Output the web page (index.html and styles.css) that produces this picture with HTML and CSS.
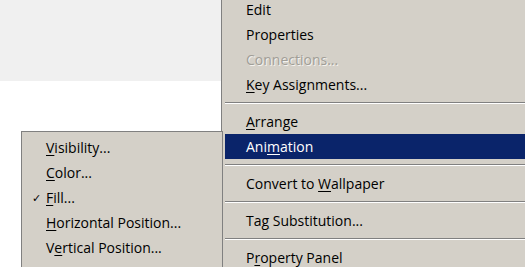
FILE: index.html
```html
<!DOCTYPE html>
<html>
<head>
<meta charset="utf-8">
<link rel="stylesheet" href="styles.css">
</head>
<body>
<div class="screen">
  <div class="canvas">
    <div class="canvas-top"></div>
  </div>
  <div class="menu">
    <div class="items">
      <div class="item">Edit</div>
      <div class="item">Properties</div>
      <div class="item disabled">Connections...</div>
      <div class="item"><u>K</u>ey Assignments...</div>
      <div class="sep"></div>
      <div class="item"><u>A</u>rrange</div>
      <div class="item active">Ani<u>m</u>ation</div>
      <div class="sep"></div>
      <div class="item">Convert to <u>W</u>allpaper</div>
      <div class="sep"></div>
      <div class="item">Ta<u>g</u> Substitution...</div>
      <div class="sep"></div>
      <div class="item">P<u>r</u>operty Panel</div>
    </div>
  </div>
  <div class="submenu">
    <div class="item"><u>V</u>isibility...</div>
    <div class="item"><u>C</u>olor...</div>
    <div class="item checked"><span class="check">&#10003;</span><u>F</u>ill...</div>
    <div class="item"><u>H</u>orizontal Position...</div>
    <div class="item">V<u>e</u>rtical Position...</div>
    <div class="item"><u>W</u>idth...</div>
  </div>
</div>
</body>
</html>
```
FILE: styles.css
```css
html, body {
  margin: 0;
  padding: 0;
  background: #ffffff;
}
.screen {
  position: relative;
  width: 525px;
  height: 267px;
  overflow: hidden;
  display: flex;
  font-family: "Open Sans", "DejaVu Sans", sans-serif;
  font-size: 14px;
  color: #000;
}
.canvas {
  width: 221px;
  flex: none;
}
.canvas-top {
  height: 81px;
  background: #f0f0f0;
}
.menu {
  flex: 1;
  background: #d4d0c8;
  border-left: 1px solid #808080;
  padding: 0 0 0 3px;
}
.items {
  margin-top: -3px;
}
.item {
  height: 25px;
  line-height: 25px;
  padding-left: 21px;
  white-space: nowrap;
  position: relative;
}
.item u {
  text-decoration-thickness: 1px;
  text-underline-offset: 2px;
}
.item.disabled {
  color: #a19e97;
  text-shadow: 1px 1px 0 #f4f2ee;
}
.item.active {
  background: #0a246a;
  color: #ffffff;
}
.sep {
  height: 2px;
  margin: 5px 0;
  border-top: 1px solid #808080;
  border-bottom: 1px solid #ffffff;
  box-sizing: border-box;
}
.submenu {
  position: absolute;
  left: 21px;
  top: 131px;
  width: 194px;
  height: 200px;
  background: #d4d0c8;
  border: 1px solid #808080;
  padding: 3px;
}
.check {
  position: absolute;
  left: 7px;
  top: 0;
  font-size: 11px;
}
```
